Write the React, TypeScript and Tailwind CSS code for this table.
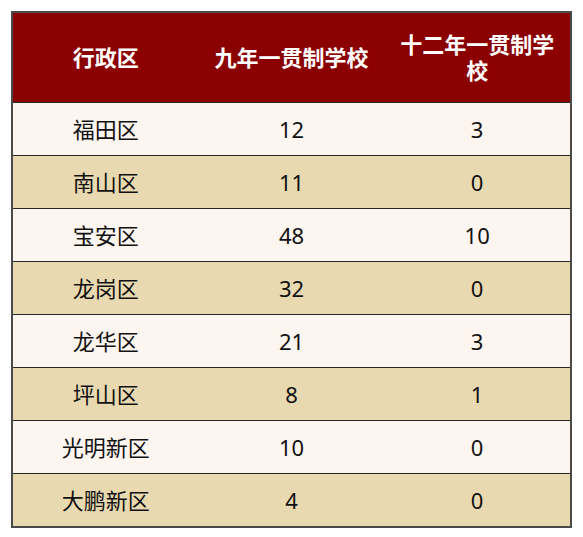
import React from 'react';

const filas = [
  { distrito: '福田区', nueve: '12', doce: '3' },
  { distrito: '南山区', nueve: '11', doce: '0' },
  { distrito: '宝安区', nueve: '48', doce: '10' },
  { distrito: '龙岗区', nueve: '32', doce: '0' },
  { distrito: '龙华区', nueve: '21', doce: '3' },
  { distrito: '坪山区', nueve: '8', doce: '1' },
  { distrito: '光明新区', nueve: '10', doce: '0' },
  { distrito: '大鹏新区', nueve: '4', doce: '0' },
];

const App = () => {
  return (
    <div className="min-h-[537px] bg-white pt-[11px] pl-[11px] font-['Noto_Sans','Noto_Sans_CJK_SC',sans-serif]">
      <div className="w-[561px] border-2 border-[#4a4a4a]">
        <div className="grid grid-cols-3 h-[89px] bg-[#8b0000] text-white font-bold text-[22px] leading-[26px] pb-[2px]">
          <div className="flex items-center justify-center text-center px-2">行政区</div>
          <div className="flex items-center justify-center text-center px-2">九年一贯制学校</div>
          <div className="flex items-center justify-center text-center px-3">十二年一贯制学校</div>
        </div>
        {filas.map((fila, i) => (
          <div
            key={fila.distrito}
            className={
              'grid grid-cols-3 h-[53px] border-t-[1.5px] border-[#262626] text-[22px] text-[#111]' +
              (i % 2 === 0 ? ' bg-[#fdf5ef]' : ' bg-[#e9d9b0]')
            }
          >
            <div className="flex items-center justify-center">{fila.distrito}</div>
            <div className="flex items-center justify-center">{fila.nueve}</div>
            <div className="flex items-center justify-center">{fila.doce}</div>
          </div>
        ))}
      </div>
    </div>
  );
};

export default App;
